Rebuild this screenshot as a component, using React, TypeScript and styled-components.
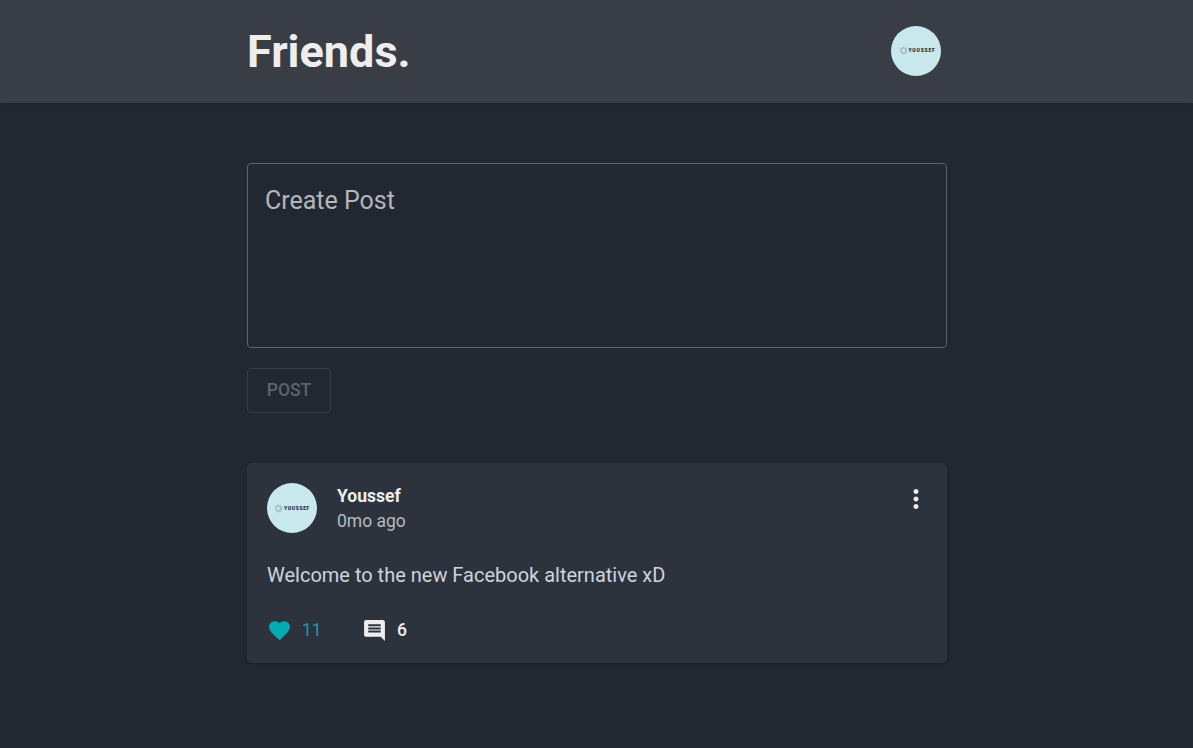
import * as React from 'react'
import styled, { createGlobalStyle } from 'styled-components';

const GlobalStyle = createGlobalStyle`
  html, body {
    margin: 0;
    padding: 0;
    background-color: #222831;
    font-family: "Roboto", "Liberation Sans", sans-serif;
  }
  * {
    box-sizing: border-box;
  }
`;

const Page = styled.div`
  min-height: 748px;
  background-color: #222831;
  overflow: hidden;
`;

const Header = styled.header`
  height: 103px;
  padding-left: 1px;
  background-color: #393e46;
  box-shadow: 0 1px 3px rgba(0, 0, 0, 0.2);
`;

const HeaderInner = styled.div`
  width: 700px;
  height: 100%;
  margin: 0 auto;
  padding: 0 6px 2px 0;
  display: flex;
  align-items: center;
  justify-content: space-between;
`;

const Logo = styled.h1`
  margin: 2px 0 0;
  color: #eeeeee;
  font-size: 45px;
  font-weight: 700;
  line-height: 1;
`;

const Avatar = styled.div<{ $wide?: boolean }>`
  width: 50px;
  height: 50px;
  flex-shrink: 0;
  border-radius: 50%;
  background-color: #c9e8ee;
  display: flex;
  align-items: center;
  justify-content: center;
  gap: 1px;
  padding-left: ${p => (p.$wide ? '2px' : '0')};
`;

const AvatarText = styled.span<{ $wide?: boolean }>`
  color: #23282f;
  font-family: "Roboto", sans-serif;
  font-size: 5px;
  font-weight: 900;
  letter-spacing: ${p => (p.$wide ? '0.75px' : '0.6px')};
  line-height: 1;
`;

const Content = styled.div`
  padding-left: 1px;
`;

const Main = styled.main`
  width: 700px;
  margin: 0 auto;
  padding-top: 60px;
`;

const PostInput = styled.textarea`
  display: block;
  width: 100%;
  height: 185px;
  padding: 22px 17px;
  background: transparent;
  border: 1px solid #5c616a;
  border-radius: 4px;
  outline: none;
  resize: none;
  color: #eeeeee;
  font-family: "Roboto", sans-serif;
  font-size: 25px;
  line-height: 30px;
  &::placeholder {
    color: #b4b6ba;
    opacity: 1;
  }
`;

const PostButton = styled.button`
  display: block;
  width: 84px;
  height: 45px;
  margin-top: 20px;
  padding: 0 0 2px;
  background: transparent;
  border: 1px solid #363b44;
  border-radius: 4px;
  color: #5f636b;
  font-family: "Roboto", sans-serif;
  font-size: 17.5px;
  font-weight: 500;
`;

const Card = styled.article`
  margin-top: 50px;
  height: 200px;
  padding: 20px;
  background-color: #2d333d;
  border-radius: 5px;
  box-shadow: 0 1px 3px rgba(0, 0, 0, 0.25);
`;

const CardHead = styled.div`
  display: flex;
  align-items: flex-start;
  gap: 20px;
`;

const Meta = styled.div`
  flex: 1;
  padding-top: 1px;
`;

const Name = styled.div`
  color: #eeeeee;
  font-size: 17.5px;
  font-weight: 700;
  line-height: 24px;
`;

const Time = styled.div`
  margin-top: 1px;
  color: #b4bac2;
  font-size: 17.5px;
  line-height: 24px;
`;

const MenuButton = styled.div`
  width: 30px;
  height: 30px;
  margin: 1px -4px 0 -6px;
  color: #eeeeee;
`;

const Body = styled.p`
  margin: 29px 0 0;
  color: #ccd4dc;
  font-size: 20px;
  line-height: 26px;
`;

const Actions = styled.div`
  display: flex;
  align-items: center;
  height: 24px;
  margin-top: 30px;
`;

const Action = styled.div<{ $active?: boolean }>`
  display: flex;
  align-items: center;
  width: 95px;
  height: 24px;
  gap: 10px;
  color: ${p => (p.$active ? '#00adb5' : '#eeeeee')};
`;

const Count = styled.span<{ $active?: boolean }>`
  color: ${p => (p.$active ? '#2097b4' : '#eeeeee')};
  font-size: 17.5px;
  font-weight: ${p => (p.$active ? 400 : 500)};
  line-height: 24px;
`;

const Icon: React.FC<{ d: string; size?: number }> = ({ d, size = 25 }) => (
  <svg width={size} height={size} viewBox="0 0 24 24" fill="currentColor" style={{ display: 'block', flexShrink: 0 }}>
    <path d={d} />
  </svg>
);

const heart = 'M12 21.35l-1.45-1.32C5.4 15.36 2 12.28 2 8.5 2 5.42 4.42 3 7.5 3c1.74 0 3.41.81 4.5 2.09C13.09 3.81 14.76 3 16.5 3 19.58 3 22 5.42 22 8.5c0 3.78-3.4 6.86-8.55 11.54L12 21.35z';
const comment = 'M21.99 4c0-1.1-.89-2-1.99-2H4c-1.1 0-2 .9-2 2v12c0 1.1.9 2 2 2h14l4 4-.01-18zM18 14H6v-2h12v2zm0-3H6V9h12v2zm0-3H6V6h12v2z';
const moreVert = 'M12 8c1.1 0 2-.9 2-2s-.9-2-2-2-2 .9-2 2 .9 2 2 2zm0 2c-1.1 0-2 .9-2 2s.9 2 2 2 2-.9 2-2-.9-2-2-2zm0 6c-1.1 0-2 .9-2 2s.9 2 2 2 2-.9 2-2-.9-2-2-2z';

const UserAvatar: React.FC<{ wide?: boolean }> = ({ wide }) => (
  <Avatar $wide={wide}>
    <svg width="9" height="9" viewBox="0 0 8 8">
      <circle cx="4" cy="4" r="2.4" fill="none" stroke="#9db2b9" strokeWidth="1.8" strokeDasharray="1.2 0.5" />
    </svg>
    <AvatarText $wide={wide}>YOUSSEF</AvatarText>
  </Avatar>
);

export default function App() {
  return (
    <Page>
      <GlobalStyle />
      <Header>
        <HeaderInner>
          <Logo>Friends.</Logo>
          <UserAvatar wide />
        </HeaderInner>
      </Header>
      <Content>
        <Main>
          <PostInput placeholder="Create Post" />
          <PostButton disabled>POST</PostButton>
          <Card>
            <CardHead>
              <UserAvatar />
              <Meta>
                <Name>Youssef</Name>
                <Time>0mo ago</Time>
              </Meta>
              <MenuButton>
                <Icon d={moreVert} size={30} />
              </MenuButton>
            </CardHead>
            <Body>Welcome to the new Facebook alternative xD</Body>
            <Actions>
              <Action $active>
                <Icon d={heart} />
                <Count $active>11</Count>
              </Action>
              <Action>
                <Icon d={comment} />
                <Count>6</Count>
              </Action>
            </Actions>
          </Card>
        </Main>
      </Content>
    </Page>
  )
}
